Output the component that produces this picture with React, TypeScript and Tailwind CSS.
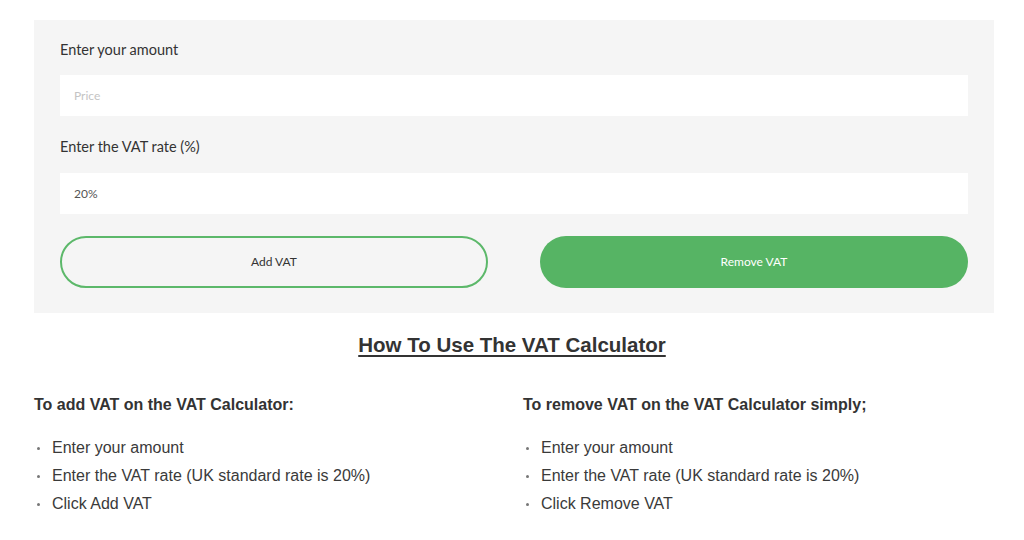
export default function App() {
  const steps = (last: string) => ['Enter your amount', 'Enter the VAT rate (UK standard rate is 20%)', last]

  return (
    <div className="min-h-[540px] w-[1024px] bg-white pt-[20px]">
      {/* Calculator */}
      <div className="ml-[34px] w-[960px] bg-[#f5f5f5] px-[26px] pt-[20px] pb-[25px] font-['Lato',sans-serif]">
        <div className="h-[20px] text-[14.5px] leading-[20px] text-[#333]">Enter your amount</div>
        <input
          className="mt-[15px] block h-[41px] w-full bg-white pl-[14px] text-[12px] text-[#555] outline-none placeholder:text-[#c4c4c4]"
          placeholder="Price"
        />
        <div className="mt-[21px] h-[20px] text-[14.5px] leading-[20px] text-[#333]">Enter the VAT rate (%)</div>
        <input
          className="mt-[16px] block h-[41px] w-full bg-white pl-[14px] text-[12px] text-[#555] outline-none"
          defaultValue="20%"
        />
        <div className="mt-[22px] flex gap-[52px]">
          <button className="h-[52px] w-[428px] rounded-full border-2 border-[#5cb86a] text-[12px] text-[#333]">
            Add VAT
          </button>
          <button className="h-[52px] w-[428px] rounded-full bg-[#56b464] text-[12px] text-white">
            Remove VAT
          </button>
        </div>
      </div>

      {/* How to */}
      <div className="font-['Liberation_Sans',Arial,sans-serif] text-[#333]">
        <h2 className="mt-[20px] text-center text-[20.5px] font-bold leading-[24px] underline decoration-[1.5px] underline-offset-[3px]">
          How To Use The VAT Calculator
        </h2>
        <div className="mt-[38px] flex pl-[34px]">
          {[
            { title: 'To add VAT on the VAT Calculator:', last: 'Click Add VAT' },
            { title: 'To remove VAT on the VAT Calculator simply;', last: 'Click Remove VAT' },
          ].map(col => (
            <div key={col.title} className="w-[489px]">
              <h3 className="text-[16px] font-bold leading-[20px]">{col.title}</h3>
              <ul className="mt-[19px]">
                {steps(col.last).map(s => (
                  <li key={s} className="flex h-[28px] items-center text-[16px] text-[#3a3a3a]">
                    <span className="ml-[3px] mr-[12px] h-[3px] w-[3px] rounded-full bg-[#777]" />
                    {s}
                  </li>
                ))}
              </ul>
            </div>
          ))}
        </div>
      </div>
    </div>
  )
}
